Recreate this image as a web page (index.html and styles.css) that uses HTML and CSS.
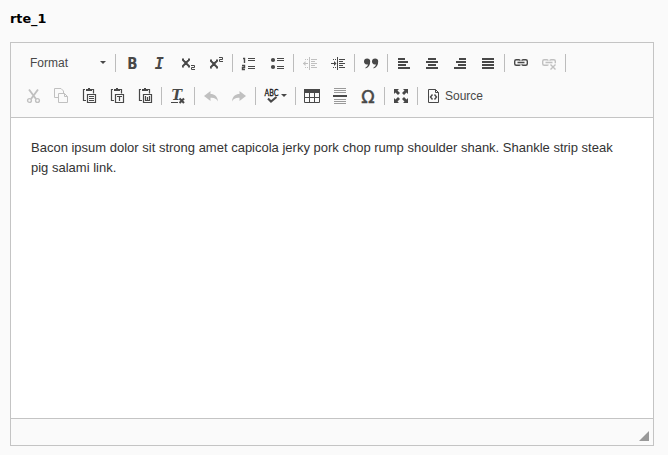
FILE: index.html
```html
<!DOCTYPE html>
<html lang="en">
<head>
<meta charset="utf-8">
<title>rte_1</title>
<link rel="stylesheet" href="styles.css">
</head>
<body>
<label class="label">rte_1</label>
<div class="editor">
  <div class="toolbar">
    <div class="row">
      <div class="combo"><span>Format</span><i class="caret"></i></div>
      <i class="sep"></i>
      <a class="btn"><svg viewBox="0 0 16 16"><text class="bold" x="3.2" y="14">B</text></svg></a>
      <a class="btn"><svg viewBox="0 0 16 16"><text class="italic" x="2.800" y="14">I</text></svg></a>
      <a class="btn"><svg viewBox="0 0 16 16"><path class="thick" d="M2.500 4.500 9.300 11.500M9.300 4.500 2.500 11.500M2 4.500h2M8 4.500h2M2 11.500h2M8 11.500h2"/><path d="M11 10.500h3.500v2h-3v2H15"/></svg></a>
      <a class="btn"><svg viewBox="0 0 16 16"><path class="thick" d="M2.500 5.500 9.300 12.500M9.300 5.500 2.500 12.500M2 5.500h2M8 5.500h2M2 12.500h2M8 12.500h2"/><path d="M11 2.500h3.500v2h-3v2H15"/></svg></a>
      <i class="sep"></i>
      <a class="btn"><svg viewBox="0 0 16 16"><path d="M7 3.5h7M7 5.5h7M7 11.500h7M7 13.500h7"/><path class="mid" d="M2 3.500h1.500V8M1 10.500h2.500v2h-2v2H4"/></svg></a>
      <a class="btn"><svg viewBox="0 0 16 16"><path d="M8 3.5h7M8 5.5h7M8 11.500h7M8 13.500h7"/><circle class="fill" cx="4" cy="5" r="2.100"/><circle class="fill" cx="4" cy="12" r="2.100"/></svg></a>
      <i class="sep"></i>
      <a class="btn off"><svg viewBox="0 0 16 16"><path d="M7.500 2v13M9 4.500h6M9 6.500h4M9 8.500h6M9 10.500h4M9 12.500h6M3 4.500h1M5 4.500h1M3 12.500h1M5 12.500h1M1 8.500h5"/><path class="fill" d="M1 8.500 3.500 6v5z"/></svg></a>
      <a class="btn"><svg viewBox="0 0 16 16"><path d="M7.500 2v13M9 4.500h6M9 6.500h4M9 8.500h6M9 10.500h4M9 12.500h6M3 4.500h1M5 4.500h1M3 12.500h1M5 12.500h1M1 8.500h5"/><path class="fill" d="M6.500 8.500 4 6v5z"/></svg></a>
      <i class="sep"></i>
      <a class="btn"><svg viewBox="0 0 16 16"><path class="fill" d="M1 6.500a3 3 0 1 1 6.200 0c0 3.500-1.600 6-4.700 7v-1C4.200 11.600 4.900 10.500 4.800 9.200 2.600 9.900 1 8.500 1 6.500zM9 6.500a3 3 0 1 1 6.200 0c0 3.500-1.600 6-4.700 7v-1c1.700-.9 2.400-2 2.300-3.300C10.600 9.900 9 8.500 9 6.500z"/></svg></a>
      <i class="sep"></i>
      <a class="btn"><svg viewBox="0 0 16 16"><path class="fill" d="M2 3h7v2H2zM2 6h10v2H2zM2 9h8v2H2zM2 12h12v2H2z"/></svg></a>
      <a class="btn"><svg viewBox="0 0 16 16"><path class="fill" d="M4 3h8v2H4zM2 6h12v2H2zM4 9h8v2H4zM2 12h12v2H2z"/></svg></a>
      <a class="btn"><svg viewBox="0 0 16 16"><path class="fill" d="M7 3h7v2H7zM4 6h10v2H4zM6 9h8v2H6zM2 12h12v2H2z"/></svg></a>
      <a class="btn"><svg viewBox="0 0 16 16"><path class="fill" d="M2 3h12v2H2zM2 6h12v2H2zM2 9h12v2H2zM2 12h12v2H2z"/></svg></a>
      <i class="sep"></i>
      <a class="btn"><svg viewBox="0 0 16 16"><path class="link" d="M7 9.500v.2Q7 10.300 6 10.300H3.200Q1.700 10.300 1.700 8.800V6.200Q1.700 4.700 3.200 4.700H6Q7 4.700 7 5.700M9 5.700Q9 4.700 10 4.700h2.800q1.500 0 1.500 1.500v2.600q0 1.500-1.500 1.500H10Q9 10.300 9 9.300M4.500 7.500h7"/></svg></a>
      <a class="btn off"><svg viewBox="0 0 16 16"><path class="link" d="M7 9.500v.2Q7 10.300 6 10.300H3.200Q1.700 10.300 1.700 8.800V6.200Q1.700 4.700 3.200 4.700H6Q7 4.700 7 5.700M9 5.700Q9 4.700 10 4.700h2.800q1.500 0 1.500 1.500v2.100M4.500 7.500h7"/><path class="mid" d="M9.500 9.500l5 5M14.500 9.500l-5 5"/></svg></a>
      <i class="sep"></i>
    </div>
    <div class="row">
      <a class="btn off"><svg viewBox="0 0 16 16"><path class="thick" d="M4 1.500 11 11M13 1.500 6 11"/><circle class="hole" cx="4.500" cy="12.500" r="1.900"/><circle class="hole" cx="12.500" cy="12.500" r="1.900"/></svg></a>
      <a class="btn off"><svg viewBox="0 0 16 16"><path d="M5 9.500H1.500v-9H8L10.500 3v2M5.500 5.500h6l3 3v6h-9zM11.500 5.500v3h3"/></svg></a>
      <a class="btn"><svg viewBox="0 0 16 16"><path class="clip" d="M4 1.500H2.500v11H5M11 1.500h1.500v4"/><path class="fill" d="M5 1h2V0h2v1h2v2H5z"/><path class="clip" d="M6.500 6.500h8v8h-8zM8 8.500h5M8 10.500h5M8 12.500h5"/></svg></a>
      <a class="btn"><svg viewBox="0 0 16 16"><path class="clip" d="M4 1.500H2.500v11H5M11 1.500h1.500v4"/><path class="fill" d="M5 1h2V0h2v1h2v2H5z"/><path class="clip" d="M6.500 6.500h8v8h-8zM8 8.500h5M10.500 8v5"/></svg></a>
      <a class="btn"><svg viewBox="0 0 16 16"><path class="clip" d="M4 1.500H2.500v11H5M11 1.500h1.500v4"/><path class="fill" d="M5 1h2V0h2v1h2v2H5z"/><path class="clip" d="M6.500 6.500h8v8h-8zM8.500 8v4.500h4V8M10.500 9v3"/></svg></a>
      <i class="sep"></i>
      <a class="btn"><svg viewBox="0 0 16 16"><text class="italic tee" x="1.500" y="12">T</text><path d="M1 14.500h7"/><path class="check" d="m9.500 10.500 4.500 4.500M14 10.500l-4.500 4.500"/></svg></a>
      <i class="sep"></i>
      <a class="btn off"><svg viewBox="0 0 16 16"><path class="fill" d="M1 8 7.500 3v3c4 0 7 2 7.500 7.500-1.500-3-4-4-7.500-3.700V13z"/></svg></a>
      <a class="btn off"><svg viewBox="0 0 16 16"><path class="fill" d="M15 8 8.500 3v3c-4 0-7 2-7.500 7.500 1.500-3 4-4 7.500-3.700V13z"/></svg></a>
      <i class="sep"></i>
      <a class="btn spell"><svg viewBox="0 0 16 16"><text class="abc" x="0.500" y="8" textLength="14" lengthAdjust="spacingAndGlyphs">ABC</text><path class="check" d="m4 10.500 3 3L12.500 9"/></svg><i class="caret"></i></a>
      <i class="sep"></i>
      <a class="btn"><svg viewBox="0 0 16 16"><path class="fill" d="M0 1h16v4H0z"/><path d="M.5 3v11.500h15V3M5.500 5v9.500M10.500 5v9.500M0 9.500h16"/></svg></a>
      <a class="btn"><svg viewBox="0 0 16 16"><path class="rule" d="M2 .5h12M2 2.500h12M2 4.500h12M2 11.500h12M2 13.500h12M2 15.500h12"/><path class="fill" d="M1 7h14v2H1z"/></svg></a>
      <a class="btn"><svg viewBox="0 0 16 16"><text class="omega" x="1.300" y="15">Ω</text></svg></a>
      <i class="sep"></i>
      <a class="btn"><svg viewBox="0 0 16 16"><path class="fill" d="M1 1h5L4.500 2.500 7 5 5 7 2.500 4.500 1 6zM15 1v5l-1.500-1.500L11 7 9 5l2.500-2.500L10 1zM1 15v-5l1.500 1.500L5 9l2 2-2.500 2.500L6 15zM15 15h-5l1.500-1.500L9 11l2-2 2.500 2.500L15 10z"/></svg></a>
      <i class="sep"></i>
      <a class="btn source"><svg viewBox="0 0 16 16"><path d="M2.500 1.500h7l3 3v10h-10zM9.500 1.500v3h3"/><path class="mid" d="M6.500 6.500 4.500 9l2 2.500M8.500 6.500l2 2.500-2 2.500"/></svg><span>Source</span></a>
    </div>
  </div>
  <div class="content"><p>Bacon ipsum dolor sit strong amet capicola jerky pork chop rump shoulder shank. Shankle strip steak pig salami link.</p></div>
  <div class="footer"><i class="grip"></i></div>
</div>
</body>
</html>
```
FILE: styles.css
```css
* { box-sizing: border-box; }
body {
  margin: 0;
  padding: 10px 14px 9px 10px;
  height: 455px;
  background: #fafafa;
  font: 12px "Liberation Sans", Arial, sans-serif;
  color: #484848;
}
.label {
  display: block;
  height: 32px;
  font: bold 12.8px/18px "DejaVu Sans", Verdana, sans-serif;
  color: #000;
}
.editor {
  display: flex;
  flex-direction: column;
  height: 404px;
  border: 1px solid #c4c4c4;
}
.toolbar {
  height: 75px;
  padding: 3px 8px 0;
  border-bottom: 1px solid #c4c4c4;
}
.row { display: flex; align-items: center; height: 33px; }
.combo {
  display: flex;
  align-items: center;
  justify-content: space-between;
  width: 94px;
  padding: 0 7px 0 11px;
}
.btn { display: flex; align-items: center; padding: 0 6px; height: 28px; color: #484848; }
.off { color: #c0c0c0; }
.sep { width: 1px; height: 18px; margin: 0 2px; background: #bcbcbc; }
.caret {
  border: 3px solid transparent;
  border-top-color: #484848;
  border-bottom: 0;
}
.spell { width: 35px; }
.spell .caret { flex: none; margin-left: 1px; }
.source { gap: 3px; }
svg { display: block; flex: none; width: 16px; height: 16px; overflow: visible; }
path, circle { fill: none; stroke: currentColor; stroke-width: 1; }
.fill { fill: currentColor; stroke: none; }
.thick { stroke-width: 1.9; }
.mid { stroke-width: 1.4; }
.clip { stroke-width: 1.2; }
.link { stroke-width: 1.4; }
.hole { stroke-width: 1.4; }
.rule { stroke: #999; }
.check { stroke-width: 2.1; }
text { fill: currentColor; }
.bold { font: bold 15px "DejaVu Sans Condensed", "DejaVu Sans", sans-serif; }
.italic { font: italic bold 15px "DejaVu Sans Mono", monospace; }
.tee { font-family: "DejaVu Serif", serif; font-size: 14px; }
.abc { font: 9px "DejaVu Sans", sans-serif; fill: #111; stroke: #111; stroke-width: .3; }
.omega { font: 17.5px "DejaVu Sans", sans-serif; stroke: currentColor; stroke-width: .5; }
.content { flex: 1; padding: 20px; background: #fff; }
.content p { margin: 0; font-size: 13px; line-height: 20px; color: #333; }
.footer {
  display: flex;
  justify-content: flex-end;
  align-items: flex-end;
  height: 27px;
  padding: 0 4px 4px 0;
  border-top: 1px solid #c4c4c4;
}
.grip {
  width: 10px;
  height: 10px;
  background: #999;
  clip-path: polygon(100% 0, 100% 100%, 0 100%);
}
```
